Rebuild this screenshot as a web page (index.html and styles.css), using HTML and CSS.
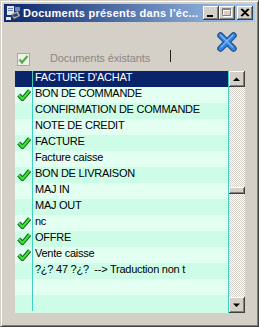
FILE: index.html
```html
<!DOCTYPE html>
<html lang="fr">
<head>
    <meta charset="UTF-8">
    <title>Documents présents dans l'écran</title>
    <link rel="stylesheet" href="styles.css">
</head>
<body>
    <div class="window">
        <div class="titlebar">
            <svg class="app-icon" viewBox="0 0 16 16" width="16" height="16">
                <rect x="0" y="0" width="16" height="16" fill="#1c2f6e"/>
                <rect x="2" y="1" width="7" height="9" fill="#dfe6f2"/>
                <rect x="3" y="3" width="5" height="1" fill="#6d7fa8"/>
                <rect x="3" y="5" width="5" height="1" fill="#6d7fa8"/>
                <path d="M6 9 L13 6 L15 11 L9 14 Z" fill="#a8b0bc"/>
                <path d="M7 10 L12 8 L13 11 L9 12 Z" fill="#3b3f4a"/>
                <rect x="10" y="2" width="5" height="4" fill="#6f8bc6"/>
                <rect x="1" y="12" width="5" height="3" fill="#e8e8e8"/>
            </svg>
            <span class="title">Documents présents dans l'éc...</span>
            <div class="title-buttons">
                <span class="tbtn">
                    <svg viewBox="0 0 16 14" width="16" height="14"><rect x="4" y="9" width="6" height="2" fill="#000"/></svg>
                </span>
                <span class="tbtn">
                    <svg viewBox="0 0 16 14" width="16" height="14">
                        <path d="M4.5 3.5h8v7h-8z M4.5 4.5h8" fill="none" stroke="#fff"/>
                        <path d="M3.5 2.5h8v7h-8z M3.5 3.5h8" fill="none" stroke="#808080"/>
                    </svg>
                </span>
                <span class="tbtn close">
                    <svg viewBox="0 0 16 14" width="16" height="14"><path d="M4 3 L11 10 M11 3 L4 10 M5 3 L12 10 M12 3 L5 10" stroke="#000" stroke-width="1.2"/></svg>
                </span>
            </div>
        </div>

        <div class="body">
            <div class="head">
                <div class="filter">
                    <span class="checkbox">
                        <svg viewBox="0 0 13 13" width="13" height="13"><path d="M2.5 6.5 L5 9.5 L10.5 3" fill="none" stroke="#4fae47" stroke-width="2.2"/></svg>
                    </span>
                    <span class="filter-label">Documents éxistants</span>
                    <span class="caret"></span>
                </div>
                <button class="close-x">
                    <svg viewBox="0 0 20 20" width="20" height="20">
                        <path d="M3.5 3.5 L16.5 16.5 M16.5 3.5 L3.5 16.5" stroke="#1f4f92" stroke-width="6.5" stroke-linecap="round"/>
                        <path d="M3.5 3.5 L16.5 16.5 M16.5 3.5 L3.5 16.5" stroke="#3483dc" stroke-width="4.2" stroke-linecap="round"/>
                        <path d="M3.5 3 L15.5 15 M16 3 L4 15" stroke="#7db9f2" stroke-width="1.2" stroke-linecap="round"/>
                    </svg>
                </button>
            </div>

            <div class="list">
                <div class="rows">
                    <div class="row selected"><span class="mark"></span><span class="name">FACTURE D'ACHAT</span></div>
                    <div class="row checked"><span class="mark"></span><span class="name">BON DE COMMANDE</span></div>
                    <div class="row"><span class="mark"></span><span class="name">CONFIRMATION DE COMMANDE</span></div>
                    <div class="row"><span class="mark"></span><span class="name">NOTE DE CREDIT</span></div>
                    <div class="row checked"><span class="mark"></span><span class="name">FACTURE</span></div>
                    <div class="row"><span class="mark"></span><span class="name">Facture caisse</span></div>
                    <div class="row checked"><span class="mark"></span><span class="name">BON DE LIVRAISON</span></div>
                    <div class="row"><span class="mark"></span><span class="name">MAJ IN</span></div>
                    <div class="row"><span class="mark"></span><span class="name">MAJ OUT</span></div>
                    <div class="row checked"><span class="mark"></span><span class="name">nc</span></div>
                    <div class="row checked"><span class="mark"></span><span class="name">OFFRE</span></div>
                    <div class="row checked"><span class="mark"></span><span class="name">Vente caisse</span></div>
                    <div class="row"><span class="mark"></span><span class="name">?¿? 47 ?¿?&nbsp; --&gt; Traduction non t</span></div>
                    <div class="row"><span class="mark"></span><span class="name"></span></div>
                    <div class="row"><span class="mark"></span><span class="name"></span></div>
                </div>
                <div class="scrollbar">
                    <span class="sb-btn">
                        <svg viewBox="0 0 16 16" width="16" height="16"><path d="M4 10 L11 10 L7.5 6.5 Z" fill="#000"/></svg>
                    </span>
                    <div class="sb-track"><span class="sb-thumb"></span></div>
                    <span class="sb-btn">
                        <svg viewBox="0 0 16 16" width="16" height="16"><path d="M4 6.5 L11 6.5 L7.5 10 Z" fill="#000"/></svg>
                    </span>
                </div>
            </div>
        </div>
    </div>
</body>
</html>
```

FILE: styles.css
```css
* {
    margin: 0;
    padding: 0;
    box-sizing: border-box;
}

body {
    background-color: #d4d0c8;
    font-family: "Liberation Sans", Arial, sans-serif;
}

.window {
    width: 259px;
    height: 327px;
    padding: 3px;
    display: flex;
    flex-direction: column;
    background-color: #d4d0c8;
    border: 1px solid;
    border-color: #d4d0c8 #404040 #404040 #d4d0c8;
    box-shadow: inset 1px 1px #fff, inset -1px -1px #808080;
}

/* title bar */
.titlebar {
    height: 18px;
    display: flex;
    align-items: center;
    padding: 0 2px 0 1px;
    background: linear-gradient(to right, #0a246a, #a6caf0);
    color: #fff;
}

.app-icon {
    flex: none;
    margin-right: 2px;
}

.title {
    flex: 1;
    font-size: 11px;
    font-weight: bold;
    letter-spacing: 0.25px;
    white-space: nowrap;
    overflow: hidden;
}

.title-buttons {
    display: flex;
}

.tbtn {
    width: 16px;
    height: 14px;
    display: flex;
    background-color: #d4d0c8;
    box-shadow: inset -1px -1px #404040, inset 1px 1px #fff, inset -2px -2px #808080;
}

.tbtn.close {
    margin-left: 2px;
}

/* content */
.body {
    flex: 1;
    display: flex;
    flex-direction: column;
    padding: 0 10px 0 11px;
}

.head {
    height: 49px;
    display: flex;
}

.filter {
    align-self: flex-end;
    height: 16px;
    margin: 0 0 5px 2px;
    display: flex;
}

.checkbox {
    align-self: flex-end;
    width: 13px;
    height: 13px;
    display: flex;
    background-color: #f0efea;
    border: 1px solid #a9a6a0;
}

.checkbox svg {
    margin: -1px;
}

.filter-label {
    width: 120px;
    margin-left: 20px;
    font-size: 11px;
    line-height: 16px;
    color: #8a8883;
    letter-spacing: -0.1px;
}

.caret {
    width: 1px;
    height: 12px;
    background-color: #202020;
}

.close-x {
    margin: 10px 8px 0 auto;
    width: 20px;
    height: 20px;
    align-self: flex-start;
    border: none;
    background: none;
    display: flex;
}

/* list */
.list {
    height: 242px;
    display: flex;
}

.rows {
    flex: 1;
    overflow: hidden;
    border-right: 1px solid #3fcfbf;
    background-color: #d0fde8;
}

.row {
    height: 16px;
    display: flex;
    background-color: #cefde7;
}

.row:nth-child(even) {
    background-color: #e2fff1;
}

.row.selected {
    background-color: #0a246a;
    color: #fff;
}

.mark {
    width: 18px;
    flex: none;
    border-right: 1px solid #3fcfbf;
    display: flex;
    align-items: center;
    justify-content: center;
}

.row.checked .mark::before {
    content: "";
    width: 14px;
    height: 12px;
    background: url("data:image/svg+xml;utf8,<svg xmlns='http://www.w3.org/2000/svg' viewBox='0 0 14 12'><path d='M1.8 6 L5.5 10 L12.6 1.6' fill='none' stroke='%23176017' stroke-width='4.2' stroke-linejoin='round'/><path d='M1.8 6 L5.5 10 L12.6 1.6' fill='none' stroke='%2330ea30' stroke-width='2.2' stroke-linejoin='round'/></svg>") no-repeat;
}

.name {
    padding-left: 2px;
    font-size: 11px;
    line-height: 13px;
    letter-spacing: -0.25px;
    white-space: nowrap;
}

/* scrollbar */
.scrollbar {
    width: 16px;
    display: flex;
    flex-direction: column;
}

.sb-btn {
    width: 16px;
    height: 16px;
    flex: none;
    display: flex;
    background-color: #d4d0c8;
    box-shadow: inset -1px -1px #404040, inset 1px 1px #fff, inset -2px -2px #808080;
}

.sb-track {
    flex: 1;
    display: flex;
    flex-direction: column;
    background: repeating-conic-gradient(#fff 0 25%, #d4d0c8 0 50%) 0 0 / 2px 2px;
}

.sb-thumb {
    margin-top: 100px;
    height: 7px;
    background-color: #d4d0c8;
    box-shadow: inset -1px -1px #404040, inset 1px 1px #fff, inset -2px -2px #808080;
}
```
